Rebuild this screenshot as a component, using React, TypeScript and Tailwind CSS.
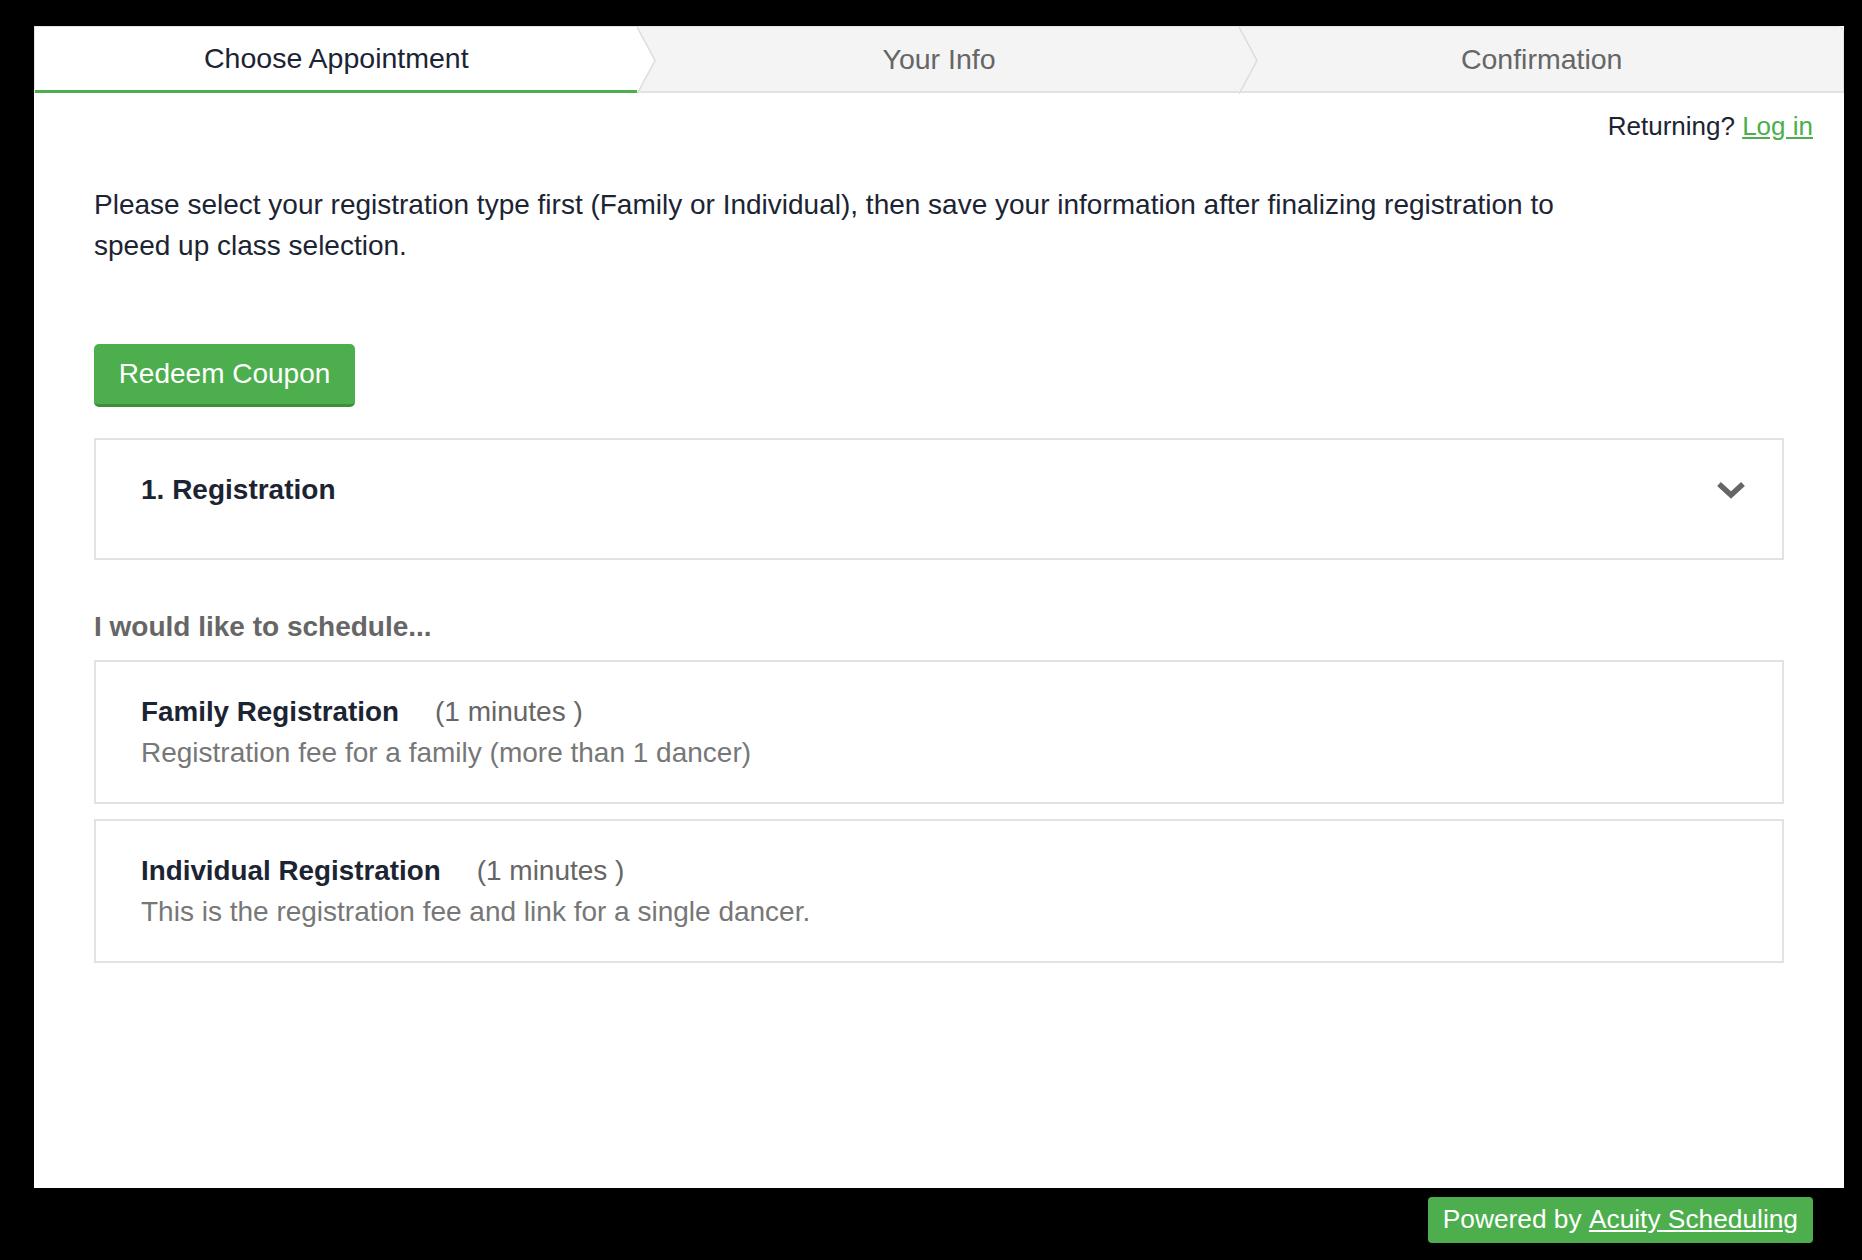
import React from 'react';

const steps = ['Choose Appointment', 'Your Info', 'Confirmation'];

const services = [
  { name: 'Family Registration', duration: '(1 minutes )', desc: 'Registration fee for a family (more than 1 dancer)' },
  { name: 'Individual Registration', duration: '(1 minutes )', desc: 'This is the registration fee and link for a single dancer.' },
];

const StepArrow: React.FC<{ fill: string; active?: boolean }> = ({ fill, active }) => (
  <svg
    className={`absolute top-0 -right-[18px] w-[19px] z-10 ${active ? '-bottom-[3px]' : '-bottom-[2px]'}`}
    viewBox="0 0 19 67"
    preserveAspectRatio="none"
  >
    <polygon points="0,0 18,33.5 0,67" fill={fill} />
    <polyline points="0,0 18,33.5 0,67" fill="none" stroke="#dcdcdc" strokeWidth="1.5" />
  </svg>
);

export default function App() {
  return (
    <div className="w-[1862px] h-[1260px] bg-black pt-[26px] pl-[34px] pr-[18px] font-['Liberation_Sans',Arial,sans-serif]">
      <div className="bg-white h-[1162px] flex flex-col">
        {/* step bar */}
        <nav className="flex h-[67px] border-t border-x border-[#e2e2e2] rounded-tr-[6px]">
          {steps.map((step, i) => {
            const active = i === 0;
            return (
              <div
                key={step}
                className={`relative flex-1 h-full flex items-center justify-center text-[28.5px] ${
                  active
                    ? 'bg-white text-[#1c2433] border-b-[3px] border-[#4cae4c]'
                    : `bg-[#f4f4f4] text-[#666] border-b-2 border-[#e2e2e2] ${i === 2 ? 'rounded-tr-[6px]' : ''}`
                }`}
              >
                {step}
                {i < steps.length - 1 && <StepArrow fill={active ? '#ffffff' : '#f4f4f4'} active={active} />}
              </div>
            );
          })}
        </nav>

        <div className="flex justify-end pr-[31px] mt-[13px] text-[26px] leading-[41px] text-[#1c2433]">
          Returning?&nbsp;<a className="text-[#4cae4c] underline">Log in</a>
        </div>

        <div className="px-[60px]">
          <p className="mt-[37px] max-w-[1520px] text-[28px] leading-[41px] text-[#1c2433]">
            Please select your registration type first (Family or Individual), then save your information after finalizing registration to speed up class selection.
          </p>

          <button className="mt-[78px] w-[261px] h-[63px] bg-[#4cae4c] border-b-[3px] border-[#3d8d3d] rounded-[5px] text-white text-[28px]">
            Redeem Coupon
          </button>

          <div className="mt-[31px] border-2 border-[#e2e2e2] pl-[45px] pr-[36px] pt-[29px] pb-[48px] flex items-center justify-between">
            <h2 className="text-[28px] leading-[41px] font-bold text-[#1c2433]">1. Registration</h2>
            <svg width="30" height="18" viewBox="0 0 30 18">
              <polyline points="3,3 15,14 27,3" fill="none" stroke="#666" strokeWidth="5.5" strokeLinejoin="miter" />
            </svg>
          </div>

          <h3 className="mt-[46px] text-[28px] leading-[41px] font-bold text-[#666]">I would like to schedule...</h3>

          <div className="mt-[13px] flex flex-col gap-[15px]">
            {services.map((s) => (
              <div key={s.name} className="border-2 border-[#e2e2e2] px-[45px] py-[29px]">
                <div className="flex items-baseline leading-[41px]">
                  <span className="text-[27.8px] font-bold text-[#1c2433] mr-[36px]">{s.name}</span>
                  <span className="text-[28px] text-[#666]">{s.duration}</span>
                </div>
                <div className="text-[28px] leading-[41px] text-[#777]">{s.desc}</div>
              </div>
            ))}
          </div>
        </div>
      </div>

      <div className="flex justify-end pr-[31px] mt-[9px]">
        <div className="bg-[#4cae4c] rounded-[4px] h-[46px] px-[15px] flex items-center text-white text-[26.3px]">
          Powered by&nbsp;<a className="underline">Acuity Scheduling</a>
        </div>
      </div>
    </div>
  );
}
